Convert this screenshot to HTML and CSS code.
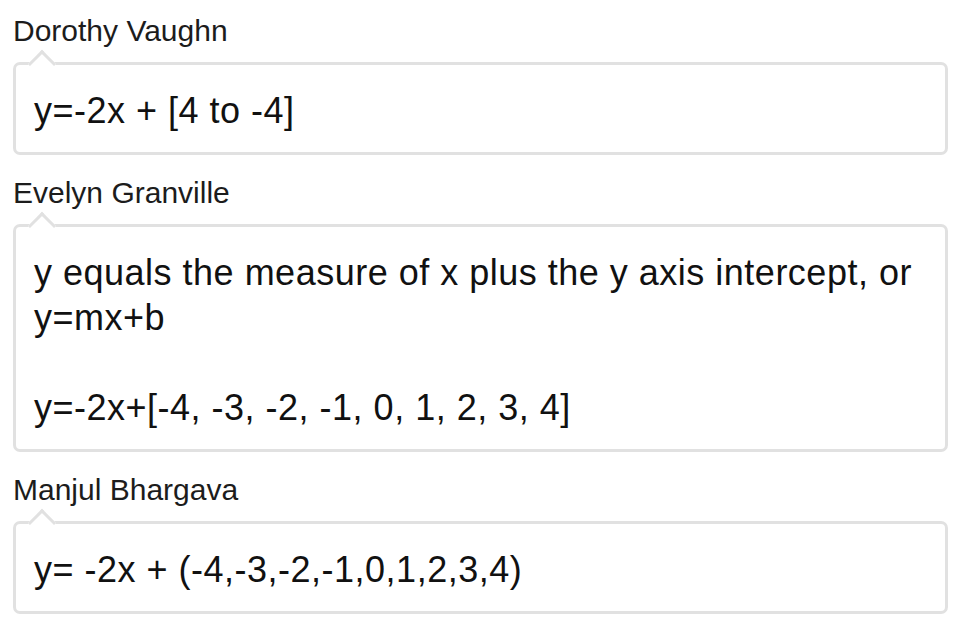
FILE: index.html
```html
<!DOCTYPE html>
<html lang="en">
<head>
<meta charset="utf-8">
<title>Responses</title>
<link rel="stylesheet" href="styles.css">
</head>
<body>
<main class="thread">
  <section class="entry">
    <div class="author">Dorothy Vaughn</div>
    <div class="bubble">
      <p class="line">y=-2x + [4 to -4]</p>
    </div>
  </section>
  <section class="entry">
    <div class="author">Evelyn Granville</div>
    <div class="bubble">
      <p class="line">y equals the measure of x plus the y axis intercept, or y=mx+b</p>
      <p class="line blank">&nbsp;</p>
      <p class="line">y=-2x+[-4, -3, -2, -1, 0, 1, 2, 3, 4]</p>
    </div>
  </section>
  <section class="entry">
    <div class="author">Manjul Bhargava</div>
    <div class="bubble">
      <p class="line">y= -2x + (-4,-3,-2,-1,0,1,2,3,4)</p>
    </div>
  </section>
</main>
</body>
</html>
```

FILE: styles.css
```css
html, body {
  margin: 0;
  padding: 0;
  background: #ffffff;
}

body {
  font-family: "Liberation Sans", Arial, Helvetica, sans-serif;
  color: #111111;
}

.thread {
  display: flex;
  flex-direction: column;
  gap: 20px;
  padding: 13px 15px 0 13px;
}

.entry {
  display: flex;
  flex-direction: column;
  gap: 13px;
}

.author {
  font-size: 30px;
  line-height: 36px;
  color: #1c1c1c;
  padding-left: 0;
}

.bubble {
  position: relative;
  border: 3px solid #e1e1e1;
  border-radius: 7px;
  padding: 23px 18px 19px 18px;
  background: #ffffff;
}

.bubble::before {
  content: "";
  position: absolute;
  top: -11px;
  left: 16px;
  width: 20px;
  height: 20px;
  background: #ffffff;
  border-top: 3px solid #e1e1e1;
  border-left: 3px solid #e1e1e1;
  box-sizing: border-box;
  transform: rotate(45deg);
}

.line {
  position: relative;
  margin: 0;
  font-size: 36px;
  line-height: 45px;
  letter-spacing: 0.5px;
  color: #111111;
}
```
